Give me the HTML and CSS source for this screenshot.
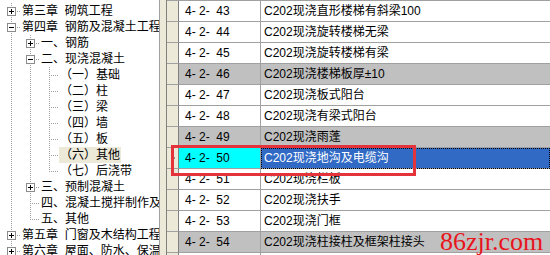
FILE: index.html
```html
<!DOCTYPE html>
<html lang="zh-CN">
<head>
  <meta charset="UTF-8">
  <link rel="stylesheet" href="styles.css">
</head>
<body>

  <div class="window">
    <div class="tree">
      <div class="node"><span class="ind tee"><i class="box plus"></i></span><span class="label">第三章  砌筑工程</span></div>
      <div class="node"><span class="ind tee"><i class="box"></i></span><span class="label">第四章  钢筋及混凝土工程</span></div>
      <div class="node"><span class="ind v"></span><span class="ind tee"><i class="box plus"></i></span><span class="label">一、钢筋</span></div>
      <div class="node"><span class="ind v"></span><span class="ind tee"><i class="box"></i></span><span class="label">二、现浇混凝土</span></div>
      <div class="node"><span class="ind v"></span><span class="ind v"></span><span class="ind tee"></span><span class="label">（一）基础</span></div>
      <div class="node"><span class="ind v"></span><span class="ind v"></span><span class="ind tee"></span><span class="label">（二）柱</span></div>
      <div class="node"><span class="ind v"></span><span class="ind v"></span><span class="ind tee"></span><span class="label">（三）梁</span></div>
      <div class="node"><span class="ind v"></span><span class="ind v"></span><span class="ind tee"></span><span class="label">（四）墙</span></div>
      <div class="node"><span class="ind v"></span><span class="ind v"></span><span class="ind tee"></span><span class="label">（五）板</span></div>
      <div class="node"><span class="ind v"></span><span class="ind v"></span><span class="ind tee"></span><span class="label selected">（六）其他</span></div>
      <div class="node"><span class="ind v"></span><span class="ind v"></span><span class="ind corner"></span><span class="label">（七）后浇带</span></div>
      <div class="node"><span class="ind v"></span><span class="ind tee"><i class="box plus"></i></span><span class="label">三、预制混凝土</span></div>
      <div class="node"><span class="ind v"></span><span class="ind tee"></span><span class="label">四、混凝土搅拌制作及运输</span></div>
      <div class="node"><span class="ind v"></span><span class="ind corner"></span><span class="label">五、其他</span></div>
      <div class="node"><span class="ind tee"><i class="box plus"></i></span><span class="label">第五章  门窗及木结构工程</span></div>
      <div class="node"><span class="ind tee"><i class="box plus"></i></span><span class="label">第六章  屋面、防水、保温及防腐工程</span></div>
    </div>

    <div class="splitter"></div>

    <div class="grid">
      <div class="row"><span class="rh"></span><span class="c1">4- 2-  43</span><span class="c2">C202现浇直形楼梯有斜梁100</span></div>
      <div class="row"><span class="rh"></span><span class="c1">4- 2-  44</span><span class="c2">C202现浇旋转楼梯无梁</span></div>
      <div class="row"><span class="rh"></span><span class="c1">4- 2-  45</span><span class="c2">C202现浇旋转楼梯有梁</span></div>
      <div class="row gray"><span class="rh"></span><span class="c1">4- 2-  46</span><span class="c2">C202现浇楼梯板厚±10</span></div>
      <div class="row"><span class="rh"></span><span class="c1">4- 2-  47</span><span class="c2">C202现浇板式阳台</span></div>
      <div class="row"><span class="rh"></span><span class="c1">4- 2-  48</span><span class="c2">C202现浇有梁式阳台</span></div>
      <div class="row gray"><span class="rh"></span><span class="c1">4- 2-  49</span><span class="c2">C202现浇雨蓬</span></div>
      <div class="row current"><span class="rh"><i class="arrow"></i></span><span class="c1">4- 2-  50</span><span class="c2">C202现浇地沟及电缆沟</span></div>
      <div class="row"><span class="rh"></span><span class="c1">4- 2-  51</span><span class="c2">C202现浇栏板</span></div>
      <div class="row"><span class="rh"></span><span class="c1">4- 2-  52</span><span class="c2">C202现浇扶手</span></div>
      <div class="row"><span class="rh"></span><span class="c1">4- 2-  53</span><span class="c2">C202现浇门框</span></div>
      <div class="row gray"><span class="rh"></span><span class="c1">4- 2-  54</span><span class="c2">C202现浇柱接柱及框架柱接头</span></div>
      <div class="row"><span class="rh"></span><span class="c1"></span><span class="c2"></span></div>
    </div>

    <div class="mark-box"></div>
    <div class="watermark">86zjr.com</div>
  </div>

</body>
</html>
```

FILE: styles.css
```css
html, body {
  margin: 0;
  padding: 0;
  width: 550px;
  height: 255px;
  overflow: hidden;
  background-color: #fff;
  font-family: "Liberation Sans", "Noto Sans CJK SC", sans-serif;
  font-size: 12px;
  color: #000;
}

.window {
  position: relative;
  display: flex;
  height: 255px;
}

/* tree */

.tree {
  flex: none;
  width: 157px;
  padding: 3px 0 0 2px;
  border-right: 1px solid #a0a0a0;
  overflow: hidden;
}

.node {
  display: flex;
  height: 16px;
  white-space: pre;
}

.ind {
  flex: none;
  width: 19px;
  height: 16px;
  background-repeat: no-repeat;
}

.ind.v {
  background-image: repeating-linear-gradient(to bottom, #a0a0a0 0 1px, transparent 1px 2px);
  background-size: 1px 16px;
  background-position: 9px 0;
}

.ind.tee {
  background-image:
    repeating-linear-gradient(to bottom, #a0a0a0 0 1px, transparent 1px 2px),
    repeating-linear-gradient(to right, #a0a0a0 0 1px, transparent 1px 2px);
  background-size: 1px 16px, 10px 1px;
  background-position: 9px 0, 9px 8px;
}

.ind.corner {
  background-image:
    repeating-linear-gradient(to bottom, #a0a0a0 0 1px, transparent 1px 2px),
    repeating-linear-gradient(to right, #a0a0a0 0 1px, transparent 1px 2px);
  background-size: 1px 9px, 10px 1px;
  background-position: 9px 0, 9px 8px;
}

.box {
  display: block;
  box-sizing: border-box;
  width: 9px;
  height: 9px;
  margin: 4px 0 0 5px;
  border: 1px solid #8c8c8c;
  background:
    linear-gradient(#000, #000) no-repeat 1px 3px / 5px 1px,
    #fff;
}

.box.plus {
  background:
    linear-gradient(#000, #000) no-repeat 1px 3px / 5px 1px,
    linear-gradient(#000, #000) no-repeat 3px 1px / 1px 5px,
    #fff;
}

.label {
  line-height: 16px;
  padding: 0 1px;
}

.label.selected {
  background-color: #ece9d8;
}

.splitter {
  flex: none;
  width: 6px;
  background-color: #ece9d8;
  border-right: 1px solid #808080;
}

/* grid */

.grid {
  flex: 1;
  border-top: 1px solid #a0a0a0;
  overflow: hidden;
}

.row {
  display: flex;
  height: 21px;
  line-height: 20px;
  white-space: pre;
}

.rh {
  flex: none;
  width: 11px;
  background-color: #ece9d8;
  border-right: 1px solid #808080;
  border-bottom: 1px solid #a0a0a0;
  display: flex;
  align-items: center;
  justify-content: center;
}

.c1 {
  flex: none;
  width: 75px;
  padding-left: 6px;
  border-right: 1px solid #a0a0a0;
  border-bottom: 1px solid #a0a0a0;
}

.c2 {
  flex: 1;
  padding-left: 3px;
  border-bottom: 1px solid #a0a0a0;
}

.row.gray .c1,
.row.gray .c2 {
  background-color: #c0c0c0;
}

.row.current .c1 {
  background-color: #00ffff;
}

.row.current .c2 {
  background-color: #316ac5;
  color: #fff;
  outline: 1px dotted #000;
  outline-offset: -1px;
}

.arrow {
  width: 0;
  height: 0;
  border-left: 4px solid #000;
  border-top: 3px solid transparent;
  border-bottom: 3px solid transparent;
}

/* annotation overlays */

.mark-box {
  position: absolute;
  left: 171px;
  top: 145px;
  width: 245px;
  height: 31px;
  box-sizing: border-box;
  border: 3px solid #e5333b;
}

.watermark {
  position: absolute;
  left: 440px;
  top: 229px;
  font-family: "Liberation Serif", serif;
  font-size: 26px;
  line-height: 26px;
  color: #e8141c;
  white-space: nowrap;
}
```
